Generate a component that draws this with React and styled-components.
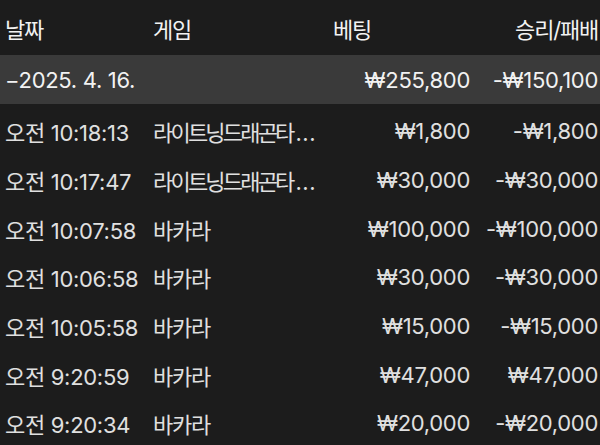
import React from 'react';
import styled, { createGlobalStyle } from 'styled-components';

const GlobalStyle = createGlobalStyle`
  html, body {
    margin: 0;
    padding: 0;
    background: #1c1c1c;
  }
  body {
    font-family: Inter, 'Noto Sans CJK KR', sans-serif;
    -webkit-font-smoothing: antialiased;
  }
`;

const Page = styled.div`
  width: 600px;
  height: 445px;
  overflow: hidden;
  background: #1c1c1c;
  color: #e4e4e4;
`;

// 날짜 / 게임 / 베팅 / 승리·패배
const Row = styled.div`
  display: grid;
  grid-template-columns: 148px 150px 170px 1fr;
  align-items: center;
  height: ${(p) => p.$h || 48.7}px;
  padding: 0 2px 0 5px;
  background: ${(p) => (p.$group ? '#3a3a3a' : 'transparent')};
  color: ${(p) => (p.$group || p.$head ? '#f2f2f2' : '#e0e0e0')};
  font-size: 22px;
  white-space: nowrap;
`;

const Cell = styled.div`
  text-align: ${(p) => p.$align || 'left'};
  padding-left: ${(p) => p.$indent || 0}px;
  padding-right: ${(p) => p.$pr || 0}px;
  letter-spacing: ${(p) => (p.$ko ? '-1.2px' : '-0.3px')};
`;

const GameName = styled.span`
  letter-spacing: ${(p) => (p.$long ? '-2.8px' : '-1.2px')};
`;

const Dots = styled.span`
  letter-spacing: 0.5px;
  margin-left: 3px;
`;

const Rows = styled.div`
  padding-top: 3px;
`;

const rows = [
  ['오전 10:18:13', '라이트닝드래곤타', '₩1,800', '-₩1,800', true],
  ['오전 10:17:47', '라이트닝드래곤타', '₩30,000', '-₩30,000', true],
  ['오전 10:07:58', '바카라', '₩100,000', '-₩100,000'],
  ['오전 10:06:58', '바카라', '₩30,000', '-₩30,000'],
  ['오전 10:05:58', '바카라', '₩15,000', '-₩15,000'],
  ['오전 9:20:59', '바카라', '₩47,000', '₩47,000'],
  ['오전 9:20:34', '바카라', '₩20,000', '-₩20,000'],
];

export default function App() {
  return (
    <Page>
      <GlobalStyle />
      <Row $head $h={55}>
        <Cell $ko>날짜</Cell>
        <Cell $ko>게임</Cell>
        <Cell $ko $indent={30}>베팅</Cell>
        <Cell $ko $align="right">승리/패배</Cell>
      </Row>
      <Row $group $h={49}>
        <Cell>−2025. 4. 16.</Cell>
        <Cell />
        <Cell $align="right" $pr={3}>₩255,800</Cell>
        <Cell $align="right">-₩150,100</Cell>
      </Row>
      <Rows>
        {rows.map((r, i) => (
          <Row key={i}>
            <Cell>{r[0]}</Cell>
            <Cell>
              <GameName $long={r[4]}>{r[1]}</GameName>
              {r[4] && <Dots>...</Dots>}
            </Cell>
            <Cell $align="right" $pr={3}>{r[2]}</Cell>
            <Cell $align="right">{r[3]}</Cell>
          </Row>
        ))}
      </Rows>
    </Page>
  );
}
